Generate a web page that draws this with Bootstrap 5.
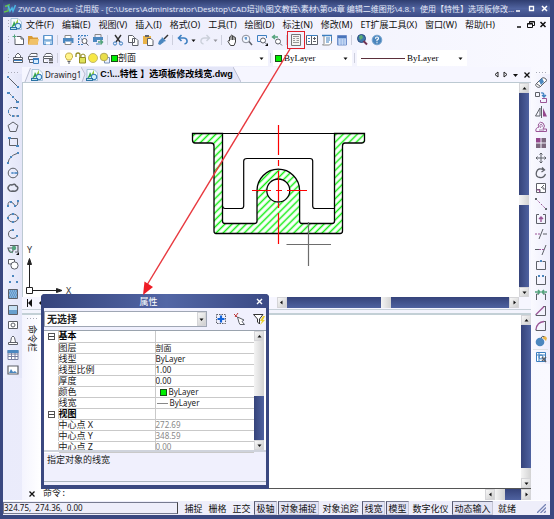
<!DOCTYPE html>
<html lang="zh-CN">
<head>
<meta charset="utf-8">
<meta name="viewport" content="width=device-width, initial-scale=1">
<title>ZWCAD Classic</title>
<link rel="stylesheet" href="https://cdn.jsdelivr.net/npm/bootstrap@5.3.0/dist/css/bootstrap.min.css">
<style>
:root{--navy:#3a4880;--face:#f0f0fd;--hair:#c3cad6}
body{font:9px/11px "Noto Sans","Noto Sans CJK SC",sans-serif;color:#222;background:#fff}
button,input,select{font:inherit;color:inherit;border:0;background:none;padding:0;margin:0;appearance:none;border-radius:0;outline-offset:-1px}
button{display:inline-flex;align-items:center;justify-content:center;white-space:nowrap;flex:none}
a{color:inherit;text-decoration:none;white-space:nowrap}
svg{display:block;flex:none}
.app-frame{border:solid var(--navy);border-width:0 4px 4px 3px;background:linear-gradient(90deg,#eaebfb,#f9f9ff)}
.titlebar{height:17px;margin:0 -4px 0 -3px;padding:0 6px 0 4px;color:#fff;background:linear-gradient(#2f3d70,#50639f 50%,#3b4a84);border-radius:4px 4px 0 0;font-family:"Open Sans","Noto Sans CJK SC",sans-serif}
.titlebar .caption{color:#e6eaf7;font-size:8px;margin-left:2px}
.menubar{height:14px;padding:0 3px 0 4px;color:#111}
.menus{gap:8px;margin-left:4px}
.toolrow{height:18px;padding-left:4px}
.grip{width:3px;height:10px;flex:none;background:radial-gradient(circle,#a9abb8 0 1px,transparent 1px) 0 0/3px 3px}
.grip-h{width:11px;height:3px;flex:none;background:radial-gradient(circle,#a9abb8 0 1px,transparent 1px) 0 0/3px 3px}
.tb{width:15px;height:15px}
.dd{width:7px;height:15px}
.vsep{width:1px;height:10px;margin:0 2px;background:#cdcfdd;flex:none}
.ic{width:12px;height:12px;fill:none;stroke:#5d6068;stroke-width:1}
.kb{stroke:#3c7fc0}.kp{stroke:#9a5596}.kg{stroke:#53a37c}.kn{stroke:none}
.fb{fill:#4b87bf}.fp{fill:#93468c}.fg{fill:#53a37c}.fw{fill:#fff}.fy{fill:#e9b347}.fs{fill:#62656c}
.picked{width:18px;height:18px;border:1px solid #e0222b;margin:0 -1px 0 -2px}
.combo{background:#fff;height:16px}
.combo select{min-width:0;flex:1;line-height:14px}
.swatch{width:7px;height:7px;background:#00ef00;border:1px solid #174d17;flex:none}
.combo .serif{font-family:"Liberation Serif",serif;font-size:9px;margin-left:2px;color:#000}
.layer-box{width:208px;padding-left:3px}
.color-box{width:79px;padding-left:2px}
.type-box{width:110px;padding-left:4px}
.rule-line{width:44px;height:1px;background:#5b2f3a}
.side{width:19px;flex:none}
.side .stack{display:grid;grid-auto-rows:1fr;justify-items:center;align-items:center;height:304px}
.side-l .stack{background:linear-gradient(90deg,#eef0fd,#e4e6f8)}
.side-r .stack{background:linear-gradient(90deg,#fafaff,#eeeefc);height:290px}
.center{background:#f6f6ff}
.tabs{height:16px;border-bottom:1px solid #bcc9d2}
.tabs .doc{height:15px;background:#eeeffb;gap:2px;color:#222;font-size:8px}
.tabs .doc.active-doc{background:#e3e5f7;font-family:"Liberation Sans","Noto Sans CJK SC",sans-serif;font-size:9px;font-weight:700;color:#000}
.canvas-row{padding-right:2px}
.paper{background:#fff;border-left:1px solid #bcc9d2;min-width:0}
.vbar,.hbar{flex:none;display:flex;background:linear-gradient(90deg,#35437a,#4f62a0)}
.hbar{background:linear-gradient(#35437a,#4f62a0)}
.vbar{width:10px;flex-direction:column}
.hbar{height:11px}
.hbar-wide{width:48%;margin-right:12px}
.cap{width:10px;height:10px;background:linear-gradient(135deg,#f7f7f7,#cfcfcf);border:1px solid #d5d5d8}
.hbar .cap{height:11px}
.thumb{flex:none;background:linear-gradient(90deg,#f4f4f4,#d3d3d3)}
.vbar .thumb{height:10px}.hbar .thumb{width:10px}
.long{flex:5}.short{flex:4}
.arw{width:5px;height:5px;fill:#111}
.split{height:6px;border-top:1px solid #c7d0d8;border-bottom:2px solid #c3d0d6;background:#f3f4fd}
.hrow{height:12px}
.lower-label{width:19px;padding:2px 0 2px;background:linear-gradient(90deg,#f4f4fe,#fff)}
.sideways{writing-mode:vertical-rl;text-orientation:sideways;font-size:9px;line-height:12px;margin-top:5px}
.cmdrow{height:12px;border-top:1px solid #555;background:#fff;font-family:"Liberation Mono","Noto Sans CJK SC",monospace}
.cmdrow label{margin-left:2px;line-height:11px}
.statusbar{height:15px;border-top:1px solid #fff;color:#111;background:#eeeefa}
.coords{width:175px;height:12px;border:1px solid #777b90;border-right-color:#444;white-space:pre;font-size:8px;line-height:10px}
.st{height:14px;width:23px;margin-right:1px}
.st.wide{width:41px}
.st.on{border:1px solid #c5c6d4;border-top-color:#777a90;border-left-color:#555870;background:#e3e4f5}
.dialog{left:38px;top:294px;width:228px;border:solid var(--navy);border-width:0 3px 4px;border-radius:4px 4px 0 0;background:var(--face);z-index:2}
.dlg-head{height:14px;margin:0 -3px;padding:0 6px 0 0;color:#fff;background:linear-gradient(90deg,#35437c,#5266a5 55%,#3b4a85);border-radius:4px 4px 0 0}
.pickrow{padding:3px 0}
.pick{height:16px;border:1px solid #9fa6b4;background:#fff;width:163px}
.pick select{font-weight:700;font-size:10px;line-height:13px;padding-left:2px;min-width:0}
.pick .cap{height:14px;width:9px}
.props{height:120px;border-top:1px solid #9aa3ae;background:#fff}
.props table{width:210px;border-collapse:collapse;table-layout:fixed}
.props th,.props td{height:11px;padding:0;line-height:10px;border-bottom:1px solid #c9c9c9;font-weight:400;white-space:nowrap}
.props td{font-size:8px}
.props th{border-right:1px solid #c9c9c9;border-left:1px solid #c9c9c9}
.props .grp th{font-weight:700;color:#000}
.props td:first-child{border-bottom-color:#fff}
.props .dim td{color:#888}
.fold{width:7px;height:7px;border:1px solid #555;margin:1px 4px;background:linear-gradient(#444,#444) center/5px 1px no-repeat #fff}
.hint{border-top:2px solid #cfd3dc;border-bottom:1px solid #aab3be;height:32px;padding:2px 3px;margin-bottom:3px}
.marker{left:0;top:0;width:554px;height:519px;pointer-events:none;z-index:3}
</style>
<script src="https://cdn.jsdelivr.net/npm/bootstrap@5.3.0/dist/js/bootstrap.bundle.min.js"></script>
</head>
<body>
<svg width="0" height="0" class="position-absolute" aria-hidden="true">
<defs>
<pattern id="hatch" width="5" height="5" patternUnits="userSpaceOnUse" patternTransform="rotate(-45)"><path d="M0 2.5H5" stroke="#10ee10" stroke-width="1.5"/></pattern>
<symbol id="dwg" viewBox="0 0 12 12"><path d="M1 .5H8L11.500 4V11.500H1Z" fill="#f5fbff" stroke="#8fb1cc" stroke-width=".7"/><path d="M1 10L3 6L4 3L6 7L8 1L7 6Z" fill="#2fa44e"/><path d="M5 6L8 1V5Z" fill="#96c93d"/><circle cx="8" cy="8" r="2.800" fill="#bfe0f5" stroke="#2b74b4"/><path d="M0 9H7V12H0Z" fill="#2b74a4"/><path d="M1 10.500H6M8 6V10M6 8H10" stroke="#dff" stroke-width=".8"/></symbol>
<symbol id="dn" viewBox="0 0 5 5"><path d="M.5 1.500H4.500L2.500 4Z"/></symbol>
<symbol id="up" viewBox="0 0 5 5"><path d="M.5 3.500H4.500L2.500 1Z"/></symbol>
<symbol id="lf" viewBox="0 0 5 5"><path d="M3.500 .5V4.500L1 2.500Z"/></symbol>
<symbol id="rt" viewBox="0 0 5 5"><path d="M1.500 .5V4.500L4 2.500Z"/></symbol>
</defs>
</svg>
<div class="app-frame d-flex flex-column vh-100 position-relative overflow-hidden">
  <header class="titlebar d-flex align-items-center flex-shrink-0">
    <svg width="12" height="12" viewBox="0 0 12 12" fill="none" stroke-width="1.500"><path d="M0 9L4 8L5 2L1 3.500" stroke="#63c34a"/><path d="M4 2.500L6 8L8 5L9 8L11.500 2" stroke="#4ab7e6"/></svg>
    <span class="caption flex-grow-1 text-nowrap">ZWCAD Classic 试用版 - [C:\Users\Administrator\Desktop\CAD培训\图文教程\素材\第04章 编辑二维图形\4.8.1&nbsp; 使用【特性】选项板修改...</span>
    <div class="d-flex gap-1">
      <button aria-label="最小化"><svg width="9" height="9" viewBox="0 0 9 9"><path d="M2 7H6" stroke="#fff" stroke-width="1.500"/></svg></button>
      <button aria-label="最大化"><svg width="9" height="9" viewBox="0 0 9 9"><path d="M2.500 2.500H6.500V6.500H2.500Z" stroke="#fff" fill="none" stroke-width="1.300"/></svg></button>
      <button aria-label="关闭"><svg width="9" height="9" viewBox="0 0 9 9"><path d="M2 2L7 7M7 2L2 7" stroke="#fff" stroke-width="1.500"/></svg></button>
    </div>
  </header>
  <nav class="menubar d-flex align-items-center flex-shrink-0">
    <span class="grip"></span><svg width="12" height="12"><use href="#dwg"/></svg>
    <div class="menus d-flex"><a href="#">文件(F)</a><a href="#">编辑(E)</a><a href="#">视图(V)</a><a href="#">插入(I)</a><a href="#">格式(O)</a><a href="#">工具(T)</a><a href="#">绘图(D)</a><a href="#">标注(N)</a><a href="#">修改(M)</a><a href="#">ET扩展工具(X)</a><a href="#">窗口(W)</a><a href="#">帮助(H)</a></div>
    <div class="d-flex gap-1 ms-auto">
      <button aria-label="最小化文档"><svg width="7" height="9" viewBox="0 0 7 9"><path d="M1 7H5" stroke="#111" stroke-width="1.500"/></svg></button>
      <button aria-label="还原文档"><svg width="8" height="9" viewBox="0 0 8 9" fill="none" stroke="#111"><path d="M2.500 3.500V1.500H7.500V5.500H5.500M.5 3.500H5.500V7.500H.5ZM.5 4H5.500M2.500 2H7.500"/></svg></button>
      <button aria-label="关闭文档"><svg width="8" height="9" viewBox="0 0 8 9"><path d="M1.500 2L6.500 7M6.500 2L1.500 7" stroke="#111" stroke-width="1.500"/></svg></button>
    </div>
  </nav>
  <div class="toolrow d-flex align-items-center flex-shrink-0" role="toolbar">
    <span class="grip"></span>
    <button class="tb" aria-label="新建"><svg class="ic" viewBox="0 0 12 12"><path class="fw" d="M3 4.500V10.500H11.500V5L9 2.500H5M9 2.500V5H11.500"/><path class="kg" d="M2.500 .5V4.500M.5 2.500H4.500"/></svg></button>
    <button class="tb" aria-label="打开"><svg class="ic" viewBox="0 0 12 12"><path class="kn" fill="#d99b35" d="M1 2H5L6 3.500H11V10.500H1Z"/><path class="kn" fill="#f1c268" d="M1.500 10.500L3 5H12L10.500 10.500Z"/></svg></button>
    <button class="tb" aria-label="保存"><svg class="ic" viewBox="0 0 12 12"><path stroke="#5b93cb" fill="#a9cceb" d="M1.500 1.500H10.500V10.500H1.500Z"/><path class="kn fw" d="M3 2H9V5.500H3ZM4 8H8V10.500H4Z"/><path stroke="#5b93cb" d="M2 6H10"/></svg></button>
    <span class="vsep"></span>
    <button class="tb" aria-label="打印"><svg class="ic" viewBox="0 0 12 12"><path stroke="#888" class="fw" d="M3 4V1.500H9V4M3 8V10.500H9V8"/><path class="kn fb" d="M1 4H11.500V9H9.500V7.500H3V9H1Z"/></svg></button>
    <button class="tb" aria-label="打印预览"><svg class="ic" viewBox="0 0 12 12"><path class="kb" stroke-dasharray="2 1" d="M1 1.500H11M1 5H5M1.500 1V11M1 10.500H6M5 1L3 4M8 1V4"/><circle cx="7.500" cy="7" r="2.500" class="fw"/><path d="M9 9L11.500 11.500"/></svg></button>
    <button class="tb" aria-label="发布"><svg class="ic" viewBox="0 0 12 12"><path d="M3 3V.5H9V3" stroke="#888"/><path class="kn fb" d="M1 3H11V6H5V8H1Z"/><path class="kb" d="M4 10H8"/><path class="kg" stroke-width="1.500" d="M6 8H10.500M8.500 6L10.500 8L8.500 10.500"/></svg></button>
    <span class="vsep"></span>
    <button class="tb" aria-label="剪切"><svg class="ic" viewBox="0 0 12 12"><path stroke="#333" stroke-width="1.400" d="M3 1L8 8M9 1L4 8"/><circle class="kb" cx="3" cy="9.500" r="1.600"/><circle class="kb" cx="9" cy="9.500" r="1.600"/></svg></button>
    <button class="tb" aria-label="复制"><svg class="ic" viewBox="0 0 12 12"><path class="fw" d="M1.500 1.500H5.500L7.500 3.500V8.500H1.500ZM5.500 4.500H9L11 6.500V11.500H5.500Z"/></svg></button>
    <button class="tb" aria-label="粘贴"><svg class="ic" viewBox="0 0 12 12"><path class="kn fy" d="M1 2H9V10H1Z"/><path class="kn fs" d="M3 1H7V3H3Z"/><path class="fw" d="M5.500 4.500H9L11 6.500V11.500H5.500Z"/></svg></button>
    <button class="tb" aria-label="特性匹配"><svg class="ic" viewBox="0 0 12 12"><path stroke="#333" stroke-width="1.500" d="M11 1L7 5"/><path class="kn fb" d="M5 3L9 7L6 8L4 6ZM4 5L7 8L3 11L1 10L2 7Z"/></svg></button>
    <span class="vsep"></span>
    <button class="tb" aria-label="撤销"><svg class="ic" viewBox="0 0 12 12"><path stroke="#3c7fc0" stroke-width="1.600" d="M4.500 1L1.500 4L4.500 7M2 4H7Q10.500 4.500 10 8Q9.500 9.500 7.500 10"/></svg></button>
    <button class="dd" aria-label="撤销列表"><svg class="arw"><use href="#dn"/></svg></button>
    <button class="tb" aria-label="重做"><svg class="ic" viewBox="0 0 12 12"><path stroke="#cbd0da" stroke-width="1.400" d="M7.500 1L10.500 4L7.500 7M10 4H5Q1.500 4.500 2 8Q2.500 9.500 4.500 10"/></svg></button>
    <button class="dd" aria-label="重做列表"><svg class="arw" opacity=".4"><use href="#dn"/></svg></button>
    <span class="vsep"></span>
    <button class="tb" aria-label="平移"><svg class="ic" viewBox="0 0 12 12"><path class="fw" stroke="#444" d="M3.500 7V3Q4 2 5 3V1.500Q6 .5 6.500 1.500V2Q7.500 1.500 8 3Q9 2.500 9.500 4V8L8 11.500H4.500L2 7.500Q2 6 3.500 7M5 3V6M6.500 2V6M8 3V6"/></svg></button>
    <button class="tb" aria-label="实时缩放"><svg class="ic" viewBox="0 0 12 12"><circle cx="5" cy="5" r="3.800" stroke="#8b8e99" fill="#f3f7ff"/><path class="kb" d="M3.500 4H6M5 3V6"/><path stroke-width="1.500" d="M8 7.500L11 11"/></svg></button>
    <button class="tb" aria-label="窗口缩放"><svg class="ic" viewBox="0 0 12 12"><path class="kb" d="M5 7.500H1.500V1.500H10.500V4"/><circle cx="7" cy="6.500" r="2.500" class="fw"/><path d="M9 8.500L11 10.500"/><path class="kn" fill="#111" d="M12 9V12H9Z"/></svg></button>
    <button class="tb" aria-label="缩放上一个"><svg class="ic" viewBox="0 0 12 12"><path class="kg" stroke-width="1.400" d="M4 1L1.500 3L4 5M2 3H7"/><circle cx="7" cy="7.500" r="2.500" class="fw"/><path d="M9 9.500L11 11.500"/></svg></button>
    <span class="vsep"></span>
    <button class="picked" aria-label="特性"><svg class="ic" viewBox="0 0 12 12"><path fill="#f5f5f2" stroke="#777" d="M1.500 .5H10.500V11.500H1.500Z"/><path stroke="#999" d="M3 2.500H9M3 4.500H5M6.500 4.500H9M3 6.500H5M6.500 6.500H9M3 8.500H9"/></svg></button>
    <button class="tb" aria-label="设计中心"><svg class="ic" viewBox="0 0 12 12"><path class="fw" d="M.5 1.500H11.500V10.500H.5ZM5.500 1.500V10.500"/><path class="kb" d="M1 1.500H11M2 4.500H4M2 7.500H4"/><path d="M8.500 3V6M7 4.500H10M7 7.500H10"/></svg></button>
    <button class="tb" aria-label="工具选项板"><svg class="ic" viewBox="0 0 12 12"><path class="fw" stroke="#888" d="M3 1V9.500L1.500 11H8.500L10.500 9V1"/><path class="kb" stroke-width="1.500" d="M1 1.500H11"/><path class="kb" d="M5 4H9M5 6H9M5 8H8M10.500 3V7"/></svg></button>
    <button class="tb" aria-label="计算器"><svg class="ic" viewBox="0 0 12 12"><path fill="#9dbbe7" stroke="#708fca" d="M1.500 1.500H10.500V11H1.500Z"/><path class="kn" fill="#4974ba" d="M2 2H10V4H2Z"/><path stroke="#eaf2ff" stroke-dasharray="1.500 1.200" d="M3 6H10M3 8H10M3 10H10"/></svg></button>
    <span class="vsep"></span>
    <button class="tb" aria-label="在线查找"><svg class="ic" viewBox="0 0 12 12"><circle cx="5.500" cy="4.500" r="4" fill="#3f78a9" stroke="#294a80"/><path class="kn" fill="#5cae74" d="M3 2L6 1L7 4L4 6Z"/><path stroke="#713353" stroke-width="2" d="M7.500 7L11 10.500"/></svg></button>
    <button class="tb" aria-label="帮助"><svg class="ic" viewBox="0 0 12 12"><circle cx="6" cy="6" r="4.800" fill="#4b86bd" stroke="#77a4cf"/><path stroke="#fff" stroke-width="1.200" d="M4.500 4.700Q4.500 3 6 3T7.500 4.500Q7.500 5.500 6 6V7.200M6 8.200V9.200"/></svg></button>
  </div>
  <div class="toolrow d-flex align-items-center flex-shrink-0" role="toolbar">
    <span class="grip"></span>
    <button class="tb" aria-label="图层特性"><svg class="ic" viewBox="0 0 12 12"><path class="fw" d="M3.500 5V3.500L6 1L8.500 3.500V5M1.500 5.500H10.500V7.500H1.500ZM1.500 8V10.500H10.500V8"/><path class="kb" d="M2 8.500H10"/></svg></button>
    <button class="tb" aria-label="图层状态"><svg class="ic" viewBox="0 0 12 12"><path class="fw" d="M2.500 3.500L4 1.500H10V3.500M1.500 4.500H10.500M1.500 4.500V7.500H6M2.500 8V10.500H6"/><path fill="#d7ecff" class="kb" d="M6.500 6.500H11.500V11.500H6.500Z"/><path class="kb" stroke-width="2" d="M6 7H12"/></svg></button>
    <button class="tb" aria-label="上一个图层"><svg class="ic" viewBox="0 0 12 12"><path class="fw" d="M2.500 3.500L4 1.500H9L10.500 3.500M1.500 4.500H10.500V6.500H1.500ZM1.500 7V10.500H6"/><path stroke="#555" stroke-width="1.400" d="M7 8H11M7 10.500H11"/></svg></button>
    <span class="vsep"></span>
    <div class="combo layer-box d-flex align-items-center">
      <svg class="ic" viewBox="0 0 12 12"><path fill="#fff48a" stroke="#c5ad43" d="M4 8Q4 7 2.500 5.500Q2 1 6 1T9.500 5.500Q8 7 8 8Z"/><path d="M4.500 9.500H7.500M5 11H7"/></svg>
      <svg class="ic" viewBox="0 0 12 12"><path stroke="#958e22" stroke-width="1.300" d="M1 5V3Q1 1 3 1T5 3V6"/><path stroke="#958e22" fill="#dfe35a" d="M4.500 5.500H10.500V11H4.500Z"/><path stroke="#958e22" d="M6 5V3Q8 1 10 3V5"/></svg>
      <svg class="ic" viewBox="0 0 12 12"><circle cx="6" cy="6" r="4.500" fill="#f7e844" stroke="#c3ba6d"/></svg>
      <svg class="ic" viewBox="0 0 12 12"><path fill="#eef3ff" stroke="#7b92ba" d="M5.500 5.500H10.500V11H5.500Z"/><circle cx="5" cy="5" r="3.800" fill="#eadf48" stroke="#b5aa54"/></svg>
      <span class="swatch"></span>
      <select aria-label="图层"><option>剖面</option></select>
      <svg class="arw me-1"><use href="#dn"/></svg>
    </div>
    <span class="vsep"></span>
    <div class="combo color-box d-flex align-items-center"><span class="swatch"></span><select class="serif" aria-label="颜色"><option>ByLayer</option></select><svg class="arw me-1"><use href="#dn"/></svg></div>
    <span class="vsep"></span>
    <div class="combo type-box d-flex align-items-center"><span class="rule-line"></span><select class="serif" aria-label="线型"><option>ByLayer</option></select><svg class="arw me-1"><use href="#dn"/></svg></div>
  </div>

  <main class="d-flex flex-grow-1 overflow-hidden">
    <aside class="side side-l pt-1"><div class="d-flex justify-content-center"><span class="grip-h"></span></div>
      <div class="stack" role="toolbar" aria-label="绘图">
        <button class="tb" aria-label="直线"><svg class="ic" viewBox="0 0 12 12"><path d="M1 1L10 10"/><path class="kn fb" d="M0 0H2V2H0ZM10 10H12V12H10Z"/></svg></button>
        <button class="tb" aria-label="构造线"><svg class="ic" viewBox="0 0 12 12"><path d="M1 1L11 11" stroke-dasharray="4 1"/><path class="kn fb" d="M0 1H3V3H0ZM9 10H12V12H9ZM5 5H7V7H5Z"/></svg></button>
        <button class="tb" aria-label="多段线"><svg class="ic" viewBox="0 0 12 12"><path d="M9 1.500H5Q1.500 2 1.500 5.500T5 10H10" stroke-dasharray="3 1"/><path class="kn fb" d="M9 1H11V3H9ZM10 9H12V11H10ZM1 4H2V7H1ZM5 9H7V11H5Z"/></svg></button>
        <button class="tb" aria-label="正多边形"><svg class="ic" viewBox="0 0 12 12"><path d="M6 1L11 4.500L9 10.500H3L1 4.500Z"/></svg></button>
        <button class="tb" aria-label="矩形"><svg class="ic" viewBox="0 0 12 12"><path d="M2.500 2.500H10.500V9.500H2.500Z"/><path class="kn fb" d="M1 1H4V3H1ZM9 9H12V11H9Z"/></svg></button>
        <button class="tb" aria-label="圆弧"><svg class="ic" viewBox="0 0 12 12"><path d="M1 11Q2 4 10 1.500"/><path class="kn fb" d="M0 10H2V12H0ZM10 0H12V2H10ZM3 4H5V6H3Z"/></svg></button>
        <button class="tb" aria-label="圆"><svg class="ic" viewBox="0 0 12 12"><circle cx="6" cy="6" r="4.800"/><path class="kb" d="M5 6H11M9 5V7M5 5V7"/></svg></button>
        <button class="tb" aria-label="修订云线"><svg class="ic" viewBox="0 0 12 12"><path stroke-width="1.500" d="M2 8Q0 6 2 4Q3 2 5 3Q8 1 9 4Q12 5 10 8Q8 10 6 9Q3 10 2 8Z"/></svg></button>
        <button class="tb" aria-label="样条曲线"><svg class="ic" viewBox="0 0 12 12"><path d="M1 8Q1 4 4 5T8 9Q11 9 11 4"/><path class="kn fb" d="M0 8H2V10H0ZM3 4H5V6H3ZM7 8H9V10H7ZM10 3H12V5H10Z"/></svg></button>
        <button class="tb" aria-label="椭圆"><svg class="ic" viewBox="0 0 12 12"><ellipse cx="6" cy="6" rx="5" ry="4"/><path class="kn fb" d="M0 5H2V7H0ZM10 5H12V7H10ZM5 1H7V3H5ZM5 9H7V11H5Z"/></svg></button>
        <button class="tb" aria-label="椭圆弧"><svg class="ic" viewBox="0 0 12 12"><path d="M6 2Q1.500 2 1.500 6T6 10.500Q9 10.500 10 8"/><path class="kn fb" d="M5 1H7V3H5ZM9 7H11V9H9Z"/></svg></button>
        <button class="tb" aria-label="插入块"><svg class="ic" viewBox="0 0 12 12"><path stroke-width="1.200" d="M3 2.500H11V9H8M1 5H6V8Q4 11 2 8Z"/><circle class="kn fg" cx="7" cy="5" r="2.200"/><path class="kg" d="M2 7L6 10"/><path class="kn" fill="#111" d="M12 9V12H9Z"/></svg></button>
        <button class="tb" aria-label="创建块"><svg class="ic" viewBox="0 0 12 12"><path class="fw" d="M1.500 6V1.500H7.500V4M1.500 6H4"/><circle class="fw" cx="7.500" cy="7.500" r="3.600"/></svg></button>
        <button class="tb" aria-label="点"><svg class="ic" viewBox="0 0 12 12"><path class="kn fb" d="M5 2H7V4H5ZM2 8H4V10H2ZM9 8H11V10H9Z"/></svg></button>
        <button class="tb" aria-label="图案填充"><svg class="ic" viewBox="0 0 12 12"><path fill="#8ab4d9" d="M1.500 1.500H10.500V10.500H1.500Z"/><path class="kb" stroke-dasharray="1 1" d="M3 3H10M2 5H10M3 7H10M2 9H10"/></svg></button>
        <button class="tb" aria-label="渐变色"><svg class="ic" viewBox="0 0 12 12"><path fill="#c5e0f3" d="M1.500 1.500H10.500V10.500H1.500Z"/><path class="kn" fill="#679fcd" d="M2 6H10V10H2Z"/></svg></button>
        <button class="tb" aria-label="面域"><svg class="ic" viewBox="0 0 12 12"><path class="fw" d="M1.500 2.500H10.500V9.500H1.500Z"/><circle cx="6" cy="6" r="2"/></svg></button>
        <button class="tb" aria-label="区域覆盖"><svg class="ic" viewBox="0 0 12 12"><path class="fw" d="M3.500 8L4.500 3.500Q6 .5 7.500 3.500L8.500 8M1.500 8.500H10.500V10.500H1.500Z"/></svg></button>
        <button class="tb" aria-label="表格"><svg class="ic" viewBox="0 0 12 12"><path class="fw" d="M1 1.500H11V10.500H1ZM1 7.500H11M4.500 3V10M8 3V10M1 5H11" stroke="#777fa0"/><path class="kn fb" d="M.5 1H11.500V4H.5Z"/></svg></button>
        <button class="tb" aria-label="图像"><svg class="ic" viewBox="0 0 12 12"><path class="fw" stroke-width="1.200" d="M1 2H11V10H1Z"/><path class="kn fb" d="M2 9L4 5L6 8L8 7L10 9Z"/></svg></button>
      </div>
    </aside>
    <section class="center d-flex flex-column flex-grow-1 overflow-hidden">
      <div class="tabs d-flex align-items-end flex-shrink-0" role="tablist">
        <svg width="9" height="15" viewBox="0 0 9 15"><path d="M3 15L9 0V15Z" fill="#eeeffb"/><path d="M3 15L8.500 1" stroke="#b9bdd0"/></svg>
        <button class="doc" role="tab"><svg width="12" height="12"><use href="#dwg"/></svg>Drawing1</button>
        <svg width="5" height="15" viewBox="0 0 5 15"><path d="M0 0H5V15H0Z" fill="#e3e5f7"/><path d="M0 0L4 7L1 15H0Z" fill="#eeeffb"/><path d="M0 0L4 7L1 15" stroke="#b9bdd0" fill="none"/></svg>
        <button class="doc active-doc" role="tab" aria-selected="true"><svg width="12" height="12"><use href="#dwg"/></svg>C:\...特性 】选项板修改线宽.dwg</button>
        <svg width="8" height="15" viewBox="0 0 8 15"><path d="M0 0L8 15H0Z" fill="#e3e5f7"/><path d="M0 0L8 15" stroke="#b9bdd0"/></svg>
        <div class="d-flex align-items-center ms-auto me-0 h-100 gap-1">
          <button aria-label="上一标签"><svg width="5" height="7" viewBox="0 0 5 7"><path d="M4 1V6L1 3.500Z" fill="none" stroke="#222"/></svg></button>
          <button aria-label="下一标签"><svg width="5" height="7" viewBox="0 0 5 7"><path d="M1 1V6L4 3.500Z" fill="none" stroke="#222"/></svg></button>
          <button aria-label="标签列表"><svg width="7" height="7" viewBox="0 0 7 7"><path d="M1 3H6L3.500 6Z" fill="#111"/></svg></button>
          <button aria-label="关闭标签"><svg width="8" height="8" viewBox="0 0 8 8"><path d="M1.500 1.500L6.500 6.500M6.500 1.500L1.500 6.500" stroke="#111" stroke-width="1.300"/></svg></button>
        </div>
      </div>
      <div class="canvas-row d-flex flex-shrink-0">
        <div class="paper flex-grow-1">
          <svg width="100%" height="214" viewBox="23 83 480 214" preserveAspectRatio="xMinYMin meet" fill="none" role="img" aria-label="零件剖面图">
            <path fill="url(#hatch)" fill-rule="evenodd" stroke="#000" stroke-width="1.300" d="M192.500 133.500H222.500V221Q222.500 223.500 225 223.500H254.500Q257 223.500 257 221V190.500A21.300 21.300 0 0 1 299.600 190.500V221Q299.600 223.500 302 223.500H332Q334.500 223.500 334.500 221V133.500H364.500V141Q364 143 362 143H345Q342.500 143 342.500 146V231Q342.500 233.500 340 233.500H216Q214 233.500 214 231V146Q214 143 211 143H195Q192.500 143 192.500 140ZM289.800 190.500A11.500 11.500 0 1 0 266.800 190.500A11.500 11.500 0 1 0 289.800 190.500Z"/>
            <path stroke="#000" stroke-width="1.200" d="M222.500 133.500H334.500M222.500 206Q223 208.500 225 208.500H241Q243.700 208.500 243.700 206V161Q243.700 158.500 247 158.500H310Q312.700 158.500 312.700 161V206Q312.700 208.500 315 208.500H334.500"/>
            <path stroke="#f00" stroke-width="1.200" d="M278.500 125V155M278.500 160V166M278.500 171V201M278.500 203V208M278.500 213V244M252 190.500H271M276 190.500H282M287 190.500H307"/>
            <path stroke="#6d6d6d" stroke-width="1.200" d="M308.500 222V266M286.500 244.500H331"/>
            <g stroke="#222"><path d="M26.500 287.500H32.500V293.500H26.500ZM29.500 287V260M33 290.500H60"/><path fill="#222" d="M27.500 264.500L29.500 258.500L31.500 264.500ZM56.500 288.500L62 290.500L56.500 292.500Z"/></g>
            <g fill="#333" font-size="9"><text x="27" y="253">Y</text><text x="66" y="294">X</text></g>
          </svg>
        </div>
        <div class="vbar"><button class="cap" aria-label="向上"><svg class="arw"><use href="#up"/></svg></button><span class="long"></span><span class="thumb"></span><span class="short"></span><button class="cap" aria-label="向下"><svg class="arw"><use href="#dn"/></svg></button></div>
      </div>
      <div class="hrow d-flex flex-shrink-0 ps-1">
        <button aria-label="首个布局"><svg width="8" height="8" viewBox="0 0 8 8"><path d="M1.500 0V8" stroke="#111"/><path d="M6 0V8L2 4Z" fill="#111"/></svg></button>
        <button class="ms-1" aria-label="上一布局"><svg width="6" height="8" viewBox="0 0 6 8"><path d="M5 0V8L1 4Z" fill="#111"/></svg></button>
        <div class="hbar hbar-wide ms-auto"><button class="cap" aria-label="向左"><svg class="arw"><use href="#lf"/></svg></button><span class="short"></span><span class="thumb"></span><span class="long"></span><button class="cap" aria-label="向右"><svg class="arw"><use href="#rt"/></svg></button></div>
      </div>
      <div class="split flex-shrink-0"></div>
      <div class="d-flex flex-grow-1 overflow-hidden">
        <div class="lower-label d-flex flex-column align-items-center flex-shrink-0"><span class="grip-h"></span><span class="sideways">命令栏</span>
          <button class="mt-auto" aria-label="关闭命令栏"><svg width="8" height="8" viewBox="0 0 8 8"><path d="M1.500 1.500L6.500 6.500M6.500 1.500L1.500 6.500" stroke="#111" stroke-width="1.300"/></svg></button></div>
        <div class="d-flex flex-column flex-grow-1 bg-white">
          <div class="d-flex flex-grow-1"><div class="flex-grow-1"></div>
            <div class="vbar"><button class="cap" aria-label="向上"><svg class="arw"><use href="#up"/></svg></button><span class="flex-fill"></span><span class="thumb"></span><button class="cap" aria-label="向下"><svg class="arw"><use href="#dn"/></svg></button></div></div>
          <div class="cmdrow d-flex align-items-center"><label for="cmd">命令:</label><input id="cmd" class="flex-grow-1">
            <div class="hbar"><button class="cap" aria-label="向左"><svg class="arw"><use href="#lf"/></svg></button><span class="thumb"></span><span class="px-2"></span><button class="cap" aria-label="向右"><svg class="arw"><use href="#rt"/></svg></button></div></div>
        </div>
      </div>
    </section>
    <aside class="side side-r pt-1"><div class="d-flex justify-content-center"><span class="grip-h"></span></div>
      <div class="stack" role="toolbar" aria-label="修改">
        <button class="tb" aria-label="删除"><svg class="ic" viewBox="0 0 12 12"><path class="fw" d="M1 8L7 2Q9 1 11 3T10 6L5 11Q3 12 1.500 10.500T1 8Z"/><path class="kn fb" d="M4 5L7 2L9 6L6 9Z"/><path d="M2 8L5 10"/></svg></button>
        <button class="tb" aria-label="复制对象"><svg class="ic" viewBox="0 0 12 12"><path d="M.5 1.500H4.500V5.500H.5Z"/><path class="kb" stroke-width="1.300" d="M6 2Q9 1 9 5M7 4L9 6L11 4"/><path class="kp" d="M7 7.500H11.500V11.500H5.500V9"/></svg></button>
        <button class="tb" aria-label="镜像"><svg class="ic" viewBox="0 0 12 12"><path d="M5 2V10H.5ZM6.500 0V12"/><path class="kn fp" d="M8 2V10.500H12Z"/></svg></button>
        <button class="tb" aria-label="偏移"><svg class="ic" viewBox="0 0 12 12"><path class="kp" d="M1 10.500H11.500V8H8Q11 5 8 2Q5 0 3.500 3Q3 5 4 6Q0 7 1 10.500"/><path d="M4 9H9M5.500 7Q4 4 6 3Q8 4 7 6" stroke="#a779a8"/></svg></button>
        <button class="tb" aria-label="阵列"><svg class="ic" viewBox="0 0 12 12"><path class="kn fp" d="M1 1H5.500V5.500H1Z"/><path class="kn" fill="#7c687e" d="M6.500 1H11V5.500H6.500ZM1 6.500H5.500V11H1ZM6.500 6.500H11V11H6.500Z"/></svg></button>
        <button class="tb" aria-label="移动"><svg class="ic" viewBox="0 0 12 12"><path d="M6 1V11M1 6H11M4.500 2.500L6 1L7.500 2.500M4.500 9.500L6 11L7.500 9.500M2.500 4.500L1 6L2.500 7.500M9.500 4.500L11 6L9.500 7.500"/></svg></button>
        <button class="tb" aria-label="旋转"><svg class="ic" viewBox="0 0 12 12"><path stroke-width="1.300" d="M7 .5L9.500 3L6.500 5M9 3Q3 0 1.500 5T5 10.500Q9 11 10.500 7"/></svg></button>
        <button class="tb" aria-label="缩放"><svg class="ic" viewBox="0 0 12 12"><path class="fw" d="M1.500 1.500H10.500V10.500H1.500Z"/><path d="M1.500 7.500H5V10.500M6 6L9 3M7 6H9V8"/><path class="kp" d="M1.500 8H4.500V10.500"/></svg></button>
        <button class="tb" aria-label="拉伸"><svg class="ic" viewBox="0 0 12 12"><path class="kp" stroke-dasharray="2 1.500" d="M1 1L10 10"/><path class="kn fs" d="M0 0H2V2H0ZM10 10H12V12H10Z"/></svg></button>
        <button class="tb" aria-label="拉长"><svg class="ic" viewBox="0 0 12 12"><path d="M4 1.500H1.500V10.500H10.500V1.500H8"/><path class="kp" stroke-width="1.400" d="M6 9V4M4 6L6 4L8 6"/></svg></button>
        <button class="tb" aria-label="修剪"><svg class="ic" viewBox="0 0 12 12"><path d="M4 11L8 1M8 6H12"/><path class="kp" stroke-dasharray="2 1" d="M0 6H6"/></svg></button>
        <button class="tb" aria-label="延伸"><svg class="ic" viewBox="0 0 12 12"><path d="M7 11L11 1M0 5.500H4"/><path class="kp" stroke-dasharray="2 1" d="M4 5.500H9"/></svg></button>
        <button class="tb" aria-label="打断于点"><svg class="ic" viewBox="0 0 12 12"><path d="M4.500 2.500H1.500V10.500H10.500V2.500H7.500"/><path class="kn fb" d="M5 1H7V3H5Z"/></svg></button>
        <button class="tb" aria-label="打断"><svg class="ic" viewBox="0 0 12 12"><path d="M1.500 2V10.500H10.500V2"/><path class="kn fb" d="M3 1H5V3H3ZM7 1H9V3H7Z"/></svg></button>
        <button class="tb" aria-label="合并"><svg class="ic" viewBox="0 0 12 12"><path d="M1.500 11V5H4M10.500 11V5H8"/><path class="kg" stroke-width="1.600" d="M0 3H5M7 3H12M3 1L5 3L3 5M9 1L7 3L9 5"/></svg></button>
        <button class="tb" aria-label="倒角"><svg class="ic" viewBox="0 0 12 12"><path d="M10.500 1V10.500H1V9M8 1.500H10"/><path class="kp" stroke-width="1.300" d="M1 9.500L9 1.500"/></svg></button>
        <button class="tb" aria-label="圆角"><svg class="ic" viewBox="0 0 12 12"><path d="M10.500 1V10.500H1V9M8 1.500H10"/><path class="kp" stroke-width="1.300" d="M1 9.500Q2 2 9 1.500"/></svg></button>
        <button class="tb" aria-label="分解"><svg class="ic" viewBox="0 0 12 12"><circle cx="5" cy="7" r="4.300" class="kn fb"/><path stroke="#456" d="M6 3Q7 0 10 2"/><path class="kn fy" d="M10 1L12 3L11 6L9 4L7 3Z"/></svg></button>
        <button class="tb border-top" aria-label="编辑图案"><svg class="ic" viewBox="0 0 12 12"><path class="kb fw" d="M1.500 1.500H10.500V10.500H1.500ZM1 4H11M4 1V11"/><circle cx="6" cy="6" r="2" class="kb"/><path stroke-width="1.400" d="M7 6L11 11M11 6L7 10"/></svg></button>
      </div>
    </aside>
  </main>

  <footer class="statusbar d-flex align-items-center flex-shrink-0">
    <output class="coords me-1">324.75,  274.36,  0.00</output>
    <button class="st">捕捉</button><button class="st">栅格</button><button class="st">正交</button><button class="st on" aria-pressed="true">极轴</button><button class="st wide on" aria-pressed="true">对象捕捉</button><button class="st wide">对象追踪</button><button class="st on" aria-pressed="true">线宽</button><button class="st on" aria-pressed="true">模型</button><button class="st wide">数字化仪</button><button class="st wide on" aria-pressed="true">动态输入</button><span class="ms-1 text-nowrap">就绪</span>
    <svg class="ms-auto me-1" width="9" height="9" viewBox="0 0 9 9"><path d="M0 9L9 0M3.500 9L9 3.500M7 9L9 7" stroke="#7684b5" stroke-width="1.300"/></svg>
  </footer>

  <section class="dialog position-absolute" role="dialog" aria-label="属性">
    <div class="dlg-head d-flex align-items-center"><span class="flex-grow-1 text-center">属性</span><button aria-label="关闭"><svg width="7" height="7" viewBox="0 0 7 7"><path d="M1 1L6 6M6 1L1 6" stroke="#fff" stroke-width="1.400"/></svg></button></div>
    <div class="pickrow d-flex align-items-center">
      <div class="pick d-flex align-items-center"><select class="flex-grow-1" aria-label="选择对象"><option>无选择</option></select><span class="cap d-flex align-items-center justify-content-center"><svg class="arw"><use href="#dn"/></svg></span></div>
      <div class="d-flex gap-1 ms-auto">
      <button class="tb" aria-label="切换"><svg class="ic" viewBox="0 0 12 12"><path stroke-dasharray="1.500 1" d="M1.500 1.500H10.500V10.500H1.500Z"/><path stroke="#1263d8" stroke-width="2.200" d="M6 2.500V9.500M2.500 6H9.500"/></svg></button>
      <button class="tb" aria-label="选择对象"><svg class="ic" viewBox="0 0 12 12"><path stroke="#b33" d="M0 1L4 5M4 0L1 4"/><path class="fw" d="M3.500 4L10 7L8 8.500L10.500 11.500H6L5 9.500Z"/></svg></button>
      <button class="tb" aria-label="快速选择"><svg class="ic" viewBox="0 0 12 12"><path class="fw" stroke="#333" d="M.5 1.500H10L6.500 6V11L4.500 9V6Z"/><path class="kn" fill="#ead12a" d="M10 3L7 8H9L7 12L12 7H10L12 3Z"/></svg></button>
      </div>
    </div>
    <div class="props d-flex">
      <table><colgroup><col width="14"><col width="97"><col width="99"></colgroup>
        <tbody>
        <tr class="grp"><td><button class="fold" aria-label="折叠基本"></button></td><th>基本</th><td></td></tr>
        <tr><td></td><th>图层</th><td>剖面</td></tr>
        <tr><td></td><th>线型</th><td>ByLayer</td></tr>
        <tr><td></td><th>线型比例</th><td>1.00</td></tr>
        <tr><td></td><th>厚度</th><td>0.00</td></tr>
        <tr><td></td><th>颜色</th><td><span class="swatch d-inline-block align-middle ms-1"></span> ByLayer</td></tr>
        <tr><td></td><th>线宽</th><td><svg class="d-inline-block align-middle" width="12" height="3"><path d="M1 1.500H12" stroke="#888"/></svg> ByLayer</td></tr>
        <tr class="grp"><td><button class="fold" aria-label="折叠视图"></button></td><th>视图</th><td></td></tr>
        <tr class="dim"><td></td><th>中心点 X</th><td>272.69</td></tr>
        <tr class="dim"><td></td><th>中心点 Y</th><td>348.59</td></tr>
        <tr class="dim"><td></td><th>中心点 Z</th><td>0.00</td></tr>
        </tbody></table>
      <div class="vbar"><button class="cap" aria-label="向上"><svg class="arw"><use href="#up"/></svg></button><span class="thumb flex-fill"></span><span class="flex-fill"></span><button class="cap" aria-label="向下"><svg class="arw"><use href="#dn"/></svg></button></div>
    </div>
    <div class="hint position-relative">指定对象的线宽</div>
  </section>
  <svg class="marker position-absolute" viewBox="3 0 554 519" aria-hidden="true"><path d="M290 49L147 285" stroke="#e8383e" stroke-width="1.400"/><path d="M143 295L144.500 281.500L153 287Z" fill="#ee1c25"/></svg>
</div>
</body>
</html>
